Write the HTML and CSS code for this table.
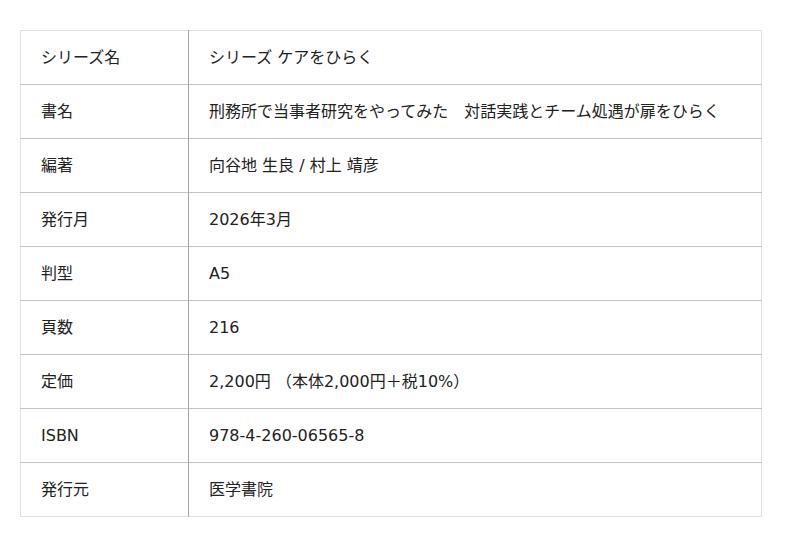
FILE: index.html
```html
<!DOCTYPE html>
<html lang="ja">
<head>
<meta charset="utf-8">
<link rel="stylesheet" href="styles.css">
</head>
<body>
<table class="spec">
  <tr><th>シリーズ名</th><td>シリーズ ケアをひらく</td></tr>
  <tr><th>書名</th><td>刑務所で当事者研究をやってみた　対話実践とチーム処遇が扉をひらく</td></tr>
  <tr><th>編著</th><td>向谷地 生良 / 村上 靖彦</td></tr>
  <tr><th>発行月</th><td>2026年3月</td></tr>
  <tr><th>判型</th><td>A5</td></tr>
  <tr><th>頁数</th><td>216</td></tr>
  <tr><th>定価</th><td>2,200円 （本体2,000円＋税10%）</td></tr>
  <tr><th>ISBN</th><td>978-4-260-06565-8</td></tr>
  <tr><th>発行元</th><td>医学書院</td></tr>
</table>
</body>
</html>
```

FILE: styles.css
```css
html, body {
  margin: 0;
  padding: 0;
  background: #fff;
}
body {
  padding: 30px 20px;
  font-family: "DejaVu Sans", "Noto Sans CJK JP", sans-serif;
  font-size: 16px;
  color: #222;
}
.spec {
  width: 742px;
  border-collapse: collapse;
  border: 1px solid #e0e0e0;
}
.spec tr {
  height: 54px;
}
.spec th,
.spec td {
  padding: 0 20px;
  text-align: left;
  font-weight: normal;
  vertical-align: middle;
  border-top: 1px solid #c4c4c4;
  line-height: 20px;
}
.spec tr:first-child th,
.spec tr:first-child td {
  border-top: 1px solid #e0e0e0;
}
.spec th {
  width: 127px;
  border-right: 1px solid #a8a8a8;
}
```
